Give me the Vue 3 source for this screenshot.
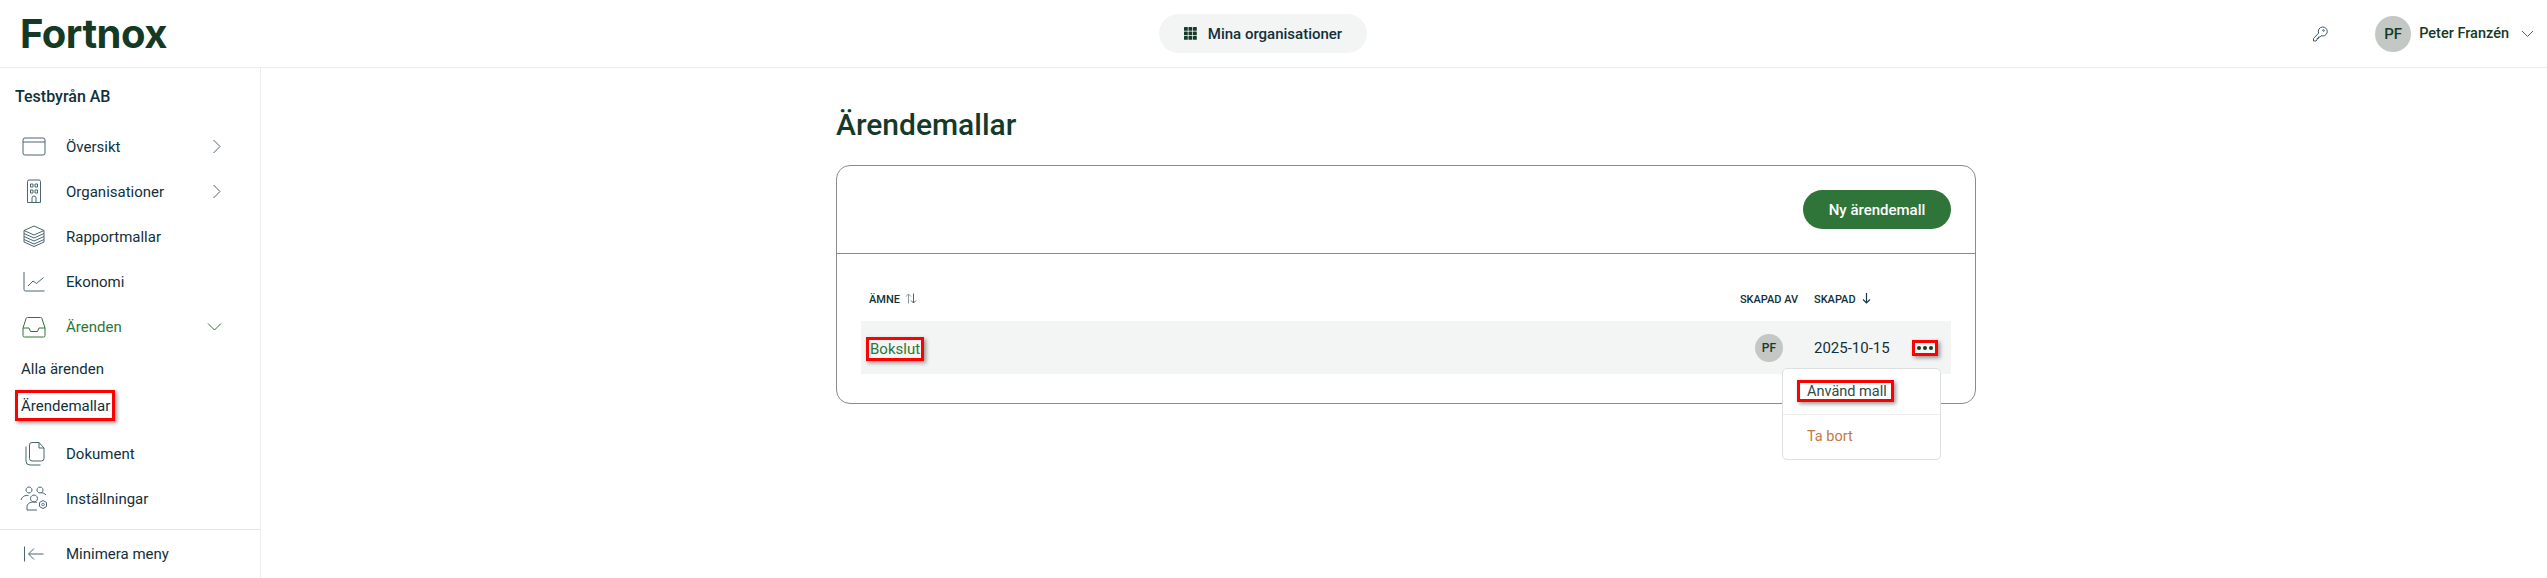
<script setup>
const menuTop = [
  { label: 'Översikt', icon: 'window', arrow: 'right' },
  { label: 'Organisationer', icon: 'building', arrow: 'right' },
  { label: 'Rapportmallar', icon: 'layers' },
  { label: 'Ekonomi', icon: 'chart' },
  { label: 'Ärenden', icon: 'inbox', arrow: 'down', active: true },
]
const menuBottom = [
  { label: 'Dokument', icon: 'docs' },
  { label: 'Inställningar', icon: 'users' },
]
const paths = {
  window: 'M5 5h18a2 2 0 0 1 2 2v13a2 2 0 0 1-2 2H5a2 2 0 0 1-2-2V7a2 2 0 0 1 2-2zM3 9h22',
  building: 'M9 2h10a1.500 1.500 0 0 1 1.500 1.500v21h-13v-21A1.500 1.500 0 0 1 9 2zM10.500 6h2.500v3h-2.500zM15 6h2.500v3H15zM10.500 12h2.500v3h-2.500zM15 12h2.500v3H15zM12 24.500V20a2 2 0 0 1 4 0v4.500',
  layers: 'M14 3l10 4.500L14 12 4 7.500zM4 7.500v3L14 15l10-4.500v-3M4 10.500v3L14 18l10-4.500v-3M4 13.500v3l10 4.500 10-4.500v-3M4 16.500v2.500l10 4.500L24 19v-2.500',
  chart: 'M4 4v17.500a1.500 1.500 0 0 0 1.500 1.500H24.500M8 18l5-5 3.500 2.500 7-6',
  inbox: 'M7.500 4.500h13a1.500 1.500 0 0 1 1.500 1.200L25 15v7.500a1.500 1.500 0 0 1-1.500 1.500h-19A1.500 1.500 0 0 1 3 22.500V15l3-9.300a1.500 1.500 0 0 1 1.500-1.200zM3 15h6l1.500 3.500h7L19 15h6',
  docs: 'M12 2.500h7l5 5.500v10.500a2.500 2.500 0 0 1-2.500 2.500H12a2.500 2.500 0 0 1-2.500-2.500V5A2.500 2.500 0 0 1 12 2.500zM19 2.500V8h5M6 6.500V21a4 4 0 0 0 4 4h10.500',
  users: 'M9 2a3 3 0 1 0 .01 0zM20 2a3 3 0 1 0 .01 0zM1 15c1-3.500 4-5 7.500-4.500M26 10c-1.500-1.500-3-2.300-5-2.300M14 10a3.500 3.500 0 1 0 .01 0zM7 25v-3c0-3 2.500-5 7-5 1 0 2 .1 3 .4M7 25h10M23 15.500l3.500 2v4l-3.500 2-3.500-2v-4zM23 18.200a1.300 1.300 0 1 0 .01 0z',
}
</script>

<template>
  <div class="page">
    <header class="topbar">
      <div class="logo">Fortnox</div>
      <button class="orgBtn">
        <svg class="gridIcon" width="13" height="13" viewBox="0 0 13 13" fill="#143a2a">
          <rect v-for="n in 9" :key="n" :x="((n - 1) % 3) * 4.5" :y="Math.floor((n - 1) / 3) * 4.500" width="3.800" height="3.800" rx=".6" />
        </svg>
        Mina organisationer
      </button>
      <div class="userArea">
        <svg class="keyIcon" width="16" height="16" viewBox="0 0 16 16" fill="none" stroke="#3c5a68" stroke-width="1">
          <path d="M10.500 1a4.500 4.500 0 0 1 .5 9c-.8 0-1.300-.2-1.800-.4L8 11H6.500v1.500H5V14l-1 1H1.500v-2.500l5.100-5.400A4.500 4.500 0 0 1 10.500 1z" />
          <circle cx="11.500" cy="4.500" r=".8" />
        </svg>
        <div class="avatar">PF</div>
        <span class="userName">Peter Franzén</span>
        <svg width="13" height="8" viewBox="0 0 13 8" fill="none" stroke="#4a6672" stroke-width="1"><path d="M1 1l5.500 5.500L12 1" /></svg>
      </div>
    </header>

    <div class="body">
      <aside class="sidebar">
        <div class="company">Testbyrån AB</div>
        <nav class="menu">
          <a v-for="item in menuTop" :key="item.label" class="menuItem" :class="{ active: item.active }">
            <span class="menuIcon">
              <svg width="28" height="28" viewBox="0 0 28 28" fill="none" stroke="currentColor" stroke-width="1"><path :d="paths[item.icon]" /></svg>
            </span>
            <span class="menuLabel">{{ item.label }}</span>
            <svg v-if="item.arrow === 'right'" class="arrow" width="10" height="15" viewBox="0 0 10 15" fill="none" stroke="#4a6672" stroke-width="1"><path d="M1.500 1l6.500 6.500L1.500 14" /></svg>
            <svg v-if="item.arrow === 'down'" class="arrowDown" width="15" height="10" viewBox="0 0 15 10" fill="none" stroke="#2f7539" stroke-width="1"><path d="M1 1.500l6.500 6.500L14 1.500" /></svg>
          </a>
          <div class="subMenu">
            <a class="subItem">Alla ärenden</a>
            <a class="subItem last"><span class="mark markSide">Ärendemallar</span></a>
          </div>
          <a v-for="item in menuBottom" :key="item.label" class="menuItem">
            <span class="menuIcon">
              <svg width="28" height="28" viewBox="0 0 28 28" fill="none" stroke="currentColor" stroke-width="1"><path :d="paths[item.icon]" /></svg>
            </span>
            <span class="menuLabel">{{ item.label }}</span>
          </a>
        </nav>
        <div class="minimize">
          <span class="menuIcon">
            <svg width="28" height="28" viewBox="0 0 28 28" fill="none" stroke="currentColor" stroke-width="1"><path d="M4.500 6.500v15M23.500 14H9M14 8.500L8.500 14l5.500 5.500" /></svg>
          </span>
          <span class="menuLabel">Minimera meny</span>
        </div>
      </aside>

      <main class="main">
        <div class="content">
          <h1 class="title">Ärendemallar</h1>
          <section class="card">
            <div class="cardHead">
              <button class="primaryBtn">Ny ärendemall</button>
            </div>
            <div class="cardBody">
              <div class="tableHead">
                <span class="colSubject">ÄMNE
                  <svg width="12" height="11" viewBox="0 0 12 11" fill="none" stroke-width="1"><path stroke="#8a9a9a" d="M3.500 10.500V1M1 3.500L3.500 1 6 3.500" /><path stroke="#51666e" d="M8.500 .5V10M6 7.500L8.500 10 11 7.500" /></svg>
                </span>
                <span class="colBy">SKAPAD AV</span>
                <span class="colDate">SKAPAD
                  <svg width="9" height="11" viewBox="0 0 9 11" fill="none" stroke="#143a4a" stroke-width="1.200"><path d="M4.500 0v10M1 6.500L4.500 10 8 6.500" /></svg>
                </span>
                <span class="colMore"></span>
              </div>
              <div class="tableRow">
                <span class="colSubject"><a class="mark link">Bokslut</a></span>
                <span class="colBy"><span class="avatar small">PF</span></span>
                <span class="colDate date">2025-10-15</span>
                <span class="colMore">
                  <span class="mark dots"><i></i><i></i><i></i></span>
                  <div class="dropdown">
                    <div class="dropItem"><span class="mark markDrop">Använd mall</span></div>
                    <div class="dropItem danger">Ta bort</div>
                  </div>
                </span>
              </div>
            </div>
          </section>
        </div>
      </main>
    </div>
  </div>
</template>

<style>
html, body { margin: 0; background: #fff; }
</style>

<style scoped>
.page {
  width: 2547px;
  height: 578px;
  overflow: hidden;
  font-family: Roboto, "Liberation Sans", sans-serif;
  color: #12303a;
}
.topbar {
  height: 68px;
  box-sizing: border-box;
  border-bottom: 1px solid #eceeee;
  display: grid;
  grid-template-columns: 1159px 208px 1fr;
  align-items: center;
}
.logo {
  padding-left: 20px;
  font-family: Inter, sans-serif;
  font-size: 40px;
  font-weight: 700;
  color: #143a25;
  line-height: 40px;
  letter-spacing: -.5px;
}
.orgBtn {
  height: 39px;
  border: none;
  border-radius: 20px;
  background: #f3f5f5;
  font: 500 15px Roboto, sans-serif;
  color: #12303a;
  display: flex;
  align-items: center;
  justify-content: center;
  gap: 11px;
  padding: 0;
}
.userArea {
  display: flex;
  align-items: center;
  justify-content: flex-end;
  padding-right: 13px;
}
.keyIcon { margin-right: 47px; }
.avatar {
  width: 36px;
  height: 36px;
  border-radius: 50%;
  background: #c3c8c5;
  color: #143a2a;
  font-weight: 500;
  font-size: 15px;
  display: flex;
  align-items: center;
  justify-content: center;
}
.avatar.small { width: 28px; height: 28px; font-size: 12px; }
.userName {
  font-weight: 500;
  font-size: 14.500px;
  color: #143a2a;
  margin: 0 12px 0 8px;
}
.body { display: flex; height: 510px; }
.sidebar {
  width: 261px;
  box-sizing: border-box;
  border-right: 1px solid #eceeee;
  display: flex;
  flex-direction: column;
}
.company {
  font-weight: 500;
  font-size: 16px;
  padding: 18px 0 0 15px;
  line-height: 22px;
  height: 56px;
  box-sizing: border-box;
}
.menu { flex: 1; }
.menuItem {
  height: 45px;
  display: flex;
  align-items: center;
  padding: 0 38px 0 20px;
  color: #4a6672;
}
.menuItem.active, .menuItem.active .menuLabel { color: #2f7539; }
.menuIcon {
  width: 28px;
  height: 28px;
  margin-right: 18px;
  color: #4a6672;
}
.menuItem.active .menuIcon { color: #2f7539; }
.menuLabel { flex: 1; font-size: 15px; color: #12303a; }
.subMenu { padding: 9px 0 0 21px; }
.subItem {
  display: block;
  font-size: 15px;
  line-height: 22px;
  height: 37px;
  color: #12303a;
}
.subItem.last { height: 36px; }
.mark {
  position: relative;
  display: inline-block;
}
.mark::after {
  content: "";
  position: absolute;
  inset: -3px -4px;
  border: 3px solid #f00;
  box-shadow: 2px 2px 4px rgba(0, 0, 0, .4);
  pointer-events: none;
}
.markSide::after { inset: -5px -5px -4px -6px; }
.markDrop::after { inset: -3px -7px -2px -10px; }
.minimize {
  height: 49px;
  border-top: 1px solid #e4e6e6;
  display: flex;
  align-items: center;
  padding-left: 20px;
  box-sizing: border-box;
  flex: none;
}
.main { flex: 1; padding-left: 4px; display: flex; justify-content: center; }
.content { width: 1140px; }
.title {
  margin: 0;
  padding-top: 39px;
  height: 97px;
  box-sizing: border-box;
  font-size: 30px;
  line-height: 36px;
  font-weight: 500;
  color: #143a2a;
}
.card {
  border: 1px solid #8b8b8b;
  border-radius: 14px;
  height: 239px;
  box-sizing: border-box;
}
.cardHead {
  height: 88px;
  box-sizing: border-box;
  border-bottom: 1px solid #8b8b8b;
  display: flex;
  align-items: center;
  justify-content: flex-end;
  padding-right: 24px;
}
.primaryBtn {
  width: 148px;
  height: 39px;
  border: none;
  border-radius: 20px;
  background: #2f7539;
  color: #fff;
  font: 500 15px Roboto, sans-serif;
}
.cardBody { padding: 27px 24px 0; }
.tableHead, .tableRow {
  display: grid;
  grid-template-columns: 1fr 58px 101px 52px;
  align-items: center;
}
.tableHead {
  font-size: 11px;
  font-weight: 500;
  height: 40px;
  box-sizing: border-box;
  padding-bottom: 4px;
  color: #12303a;
}
.tableHead .colSubject { padding-left: 8px; }
.tableHead svg { vertical-align: -1px; margin-left: 2px; }
.tableHead .colDate svg { margin-left: 4px; }
.tableHead .colBy { white-space: nowrap; }
.tableRow {
  height: 53px;
  background: #f3f5f4;
  font-size: 15px;
}
.colSubject { padding-left: 9px; }
.tableRow .colSubject { padding-top: 3px; }
.colBy { display: flex; justify-content: center; }
.colDate { padding-left: 16px; }
.link { color: #2f7539; }
.colMore { position: relative; display: flex; justify-content: center; }
.dots {
  display: inline-flex;
  gap: 2px;
  align-items: center;
  height: 12px;
  padding: 0 2px;
}
.dots i {
  width: 4px;
  height: 4px;
  border-radius: 50%;
  background: #143a2a;
}
.dots.mark::after { inset: -2px -3px; }
.dropdown {
  position: absolute;
  top: 26px;
  right: 10px;
  width: 159px;
  height: 92px;
  box-sizing: border-box;
  background: #fff;
  border: 1px solid #dde0e0;
  border-radius: 5px;
  z-index: 2;
}
.dropItem {
  height: 46px;
  display: flex;
  align-items: center;
  padding-left: 24px;
  font-size: 14.500px;
  box-sizing: border-box;
  color: #2e4a4a;
}
.dropItem:first-child { border-bottom: 1px solid #eceeee; }
.danger { color: #c27a45; height: 44px; }
</style>
